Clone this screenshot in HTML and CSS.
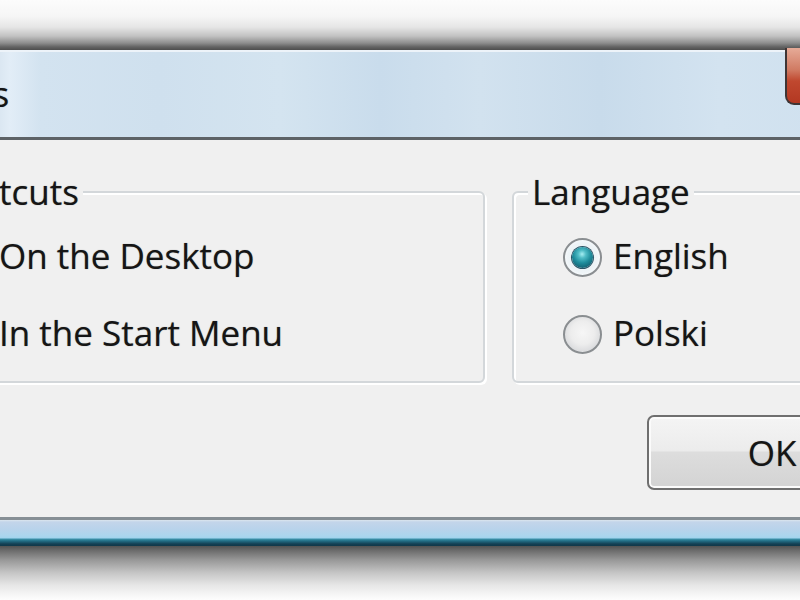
FILE: index.html
```html
<!DOCTYPE html>
<html lang="en">
<head>
<meta charset="utf-8">
<title>Options</title>
<link rel="stylesheet" href="styles.css">
</head>
<body>
<div class="screen">
  <div class="window">
    <div class="shadow-top"></div>
    <div class="titlebar">
      <span class="title">Options</span>
      <span class="close"></span>
    </div>
    <div class="client">
      <div class="groups">
        <fieldset class="group group-left">
          <legend>Shortcuts</legend>
          <label class="row row-check"><span class="check"></span><span class="label">On the Desktop</span></label>
          <label class="row row-check"><span class="check"></span><span class="label">In the Start Menu</span></label>
        </fieldset>
        <fieldset class="group group-right">
          <legend>Language</legend>
          <label class="row row-radio"><span class="radio on"><span class="dot"></span></span><span class="label">English</span></label>
          <label class="row row-radio"><span class="radio"></span><span class="label">Polski</span></label>
        </fieldset>
      </div>
      <div class="actions"><button class="btn" type="button">OK</button></div>
    </div>
    <div class="frame-bottom"></div>
    <div class="shadow-bottom"></div>
  </div>
</div>
</body>
</html>
```

FILE: styles.css
```css
* { box-sizing: border-box; }

html, body {
  margin: 0;
  padding: 0;
  background: #ffffff;
}

body {
  width: 800px;
  height: 600px;
  overflow: hidden;
  font-family: "Open Sans", "Noto Sans", sans-serif;
  font-size: 35px;
  color: #151515;
}

.screen {
  width: 800px;
  height: 600px;
  overflow: hidden;
}

.window {
  width: 1057px;
  margin-left: -140px;
}

.shadow-top {
  height: 50px;
  background: linear-gradient(180deg, #fcfcfc 0, #f6f6f6 16px, #e6e6e6 27px, #c2c2c2 36px, #8e8e8e 43px, #626262 47px, #4e4e4e 50px);
}

.titlebar {
  height: 87px;
  border-top: 2px solid #edf3f9;
  background: linear-gradient(90deg, #dbe7f2 0, #dbe7f2 140px, #e2edf7 150px, #d3e3f0 180px, #cfe0ee 300px, #d4e4f0 420px, #c9dcec 520px, #d2e2ef 620px, #c8dbeb 740px, #d3e3f0 860px, #cddfee 1057px);
  display: flex;
  align-items: center;
  padding-left: 20px;
  padding-bottom: 2px;
}

.title {
  line-height: 40px;
  white-space: nowrap;
  text-shadow: 0 0 1px rgba(0, 0, 0, 0.45);
}

.close {
  align-self: flex-start;
  margin-left: auto;
  margin-top: -4px;
  margin-right: 72px;
  width: 60px;
  height: 57px;
  border: 2px solid #3e3535;
  border-top: none;
  border-radius: 0 0 9px 9px;
  background: linear-gradient(180deg, #e6ab98 0, #d07a62 40%, #c0482f 60%, #b33822 100%);
}

.client {
  height: 383px;
  border-top: 3px solid #5d6266;
  border-bottom: 3px solid #868f95;
  background: #f0f0f0;
  padding: 32px 20px 0;
}

.groups {
  display: flex;
  gap: 27px;
}

.group {
  margin: 0;
  min-width: 0;
  padding: 24px 0 28px;
  border: 2px solid #d3d7da;
  border-radius: 6px;
  box-shadow: 2px 2px 0 #ffffff, inset 2px 2px 0 #ffffff;
}

.group-left { width: 605px; flex: none; }
.group-right { flex: 1; }

.group legend {
  padding: 0 4px;
  line-height: 40px;
  background: #f0f0f0;
  text-shadow: 0 0 1px rgba(0, 0, 0, 0.45);
}

.group-left legend { margin-left: 37px; }
.group-right legend { margin-left: 14px; }

.row {
  display: flex;
  align-items: center;
  height: 40px;
  line-height: 40px;
  white-space: nowrap;
}

.row + .row { margin-top: 37px; }

.label { text-shadow: 0 0 1px rgba(0, 0, 0, 0.45); }

.row-check { padding-left: 64px; gap: 14px; }
.row-radio { padding-left: 49px; gap: 11px; }

.check {
  flex: none;
  width: 39px;
  height: 39px;
  border: 2px solid #8d9195;
  background: linear-gradient(135deg, #dcdfe2, #fbfbfb);
}

.radio {
  flex: none;
  width: 39px;
  height: 39px;
  margin-top: 2px;
  border-radius: 50%;
  border: 2px solid #8a8e91;
  background: radial-gradient(circle at 50% 45%, #f6f6f6 0, #ededed 45%, #dcdddf 70%, #fafafa 82%, #c9ccce 100%);
  display: grid;
  place-items: center;
}

.radio.on {
  background: radial-gradient(circle at 50% 50%, #e7eef2 0, #eef4f7 60%, #fbfdfe 80%, #ccd3d7 100%);
}

.dot {
  width: 21px;
  height: 21px;
  border-radius: 50%;
  background: radial-gradient(circle at 48% 34%, #a6eef2 0, #4fbcc6 22%, #1f8d9c 50%, #15697a 75%, #0f4456 100%);
  box-shadow: 0 0 0 1px #2c5466;
}

.actions {
  display: flex;
  justify-content: flex-end;
  margin-top: 32px;
}

.btn {
  width: 250px;
  height: 75px;
  padding: 0;
  font: inherit;
  line-height: 40px;
  color: #151515;
  border: 2px solid #6f6f6f;
  border-radius: 7px;
  background: linear-gradient(180deg, #f4f4f4 0, #ececec 47%, #dddddd 50%, #d3d3d3 100%);
  box-shadow: inset 0 0 0 2px #fbfbfb;
  text-shadow: 0 0 1px rgba(0, 0, 0, 0.45);
}

.frame-bottom {
  height: 26px;
  background: linear-gradient(180deg, #dce6ee 0, #c3d5ea 2px, #b9d3eb 9px, #aad6ee 16px, #a2d4ee 18px, #3d93ab 19px, #226d84 21px, #143f53 24px, #10384a 26px);
}

.shadow-bottom {
  height: 54px;
  background: linear-gradient(180deg, #525252 0, #6e6e6e 5px, #989898 14px, #c6c6c6 27px, #e6e6e6 39px, #f8f8f8 50px, #fdfdfd 54px);
}
```
